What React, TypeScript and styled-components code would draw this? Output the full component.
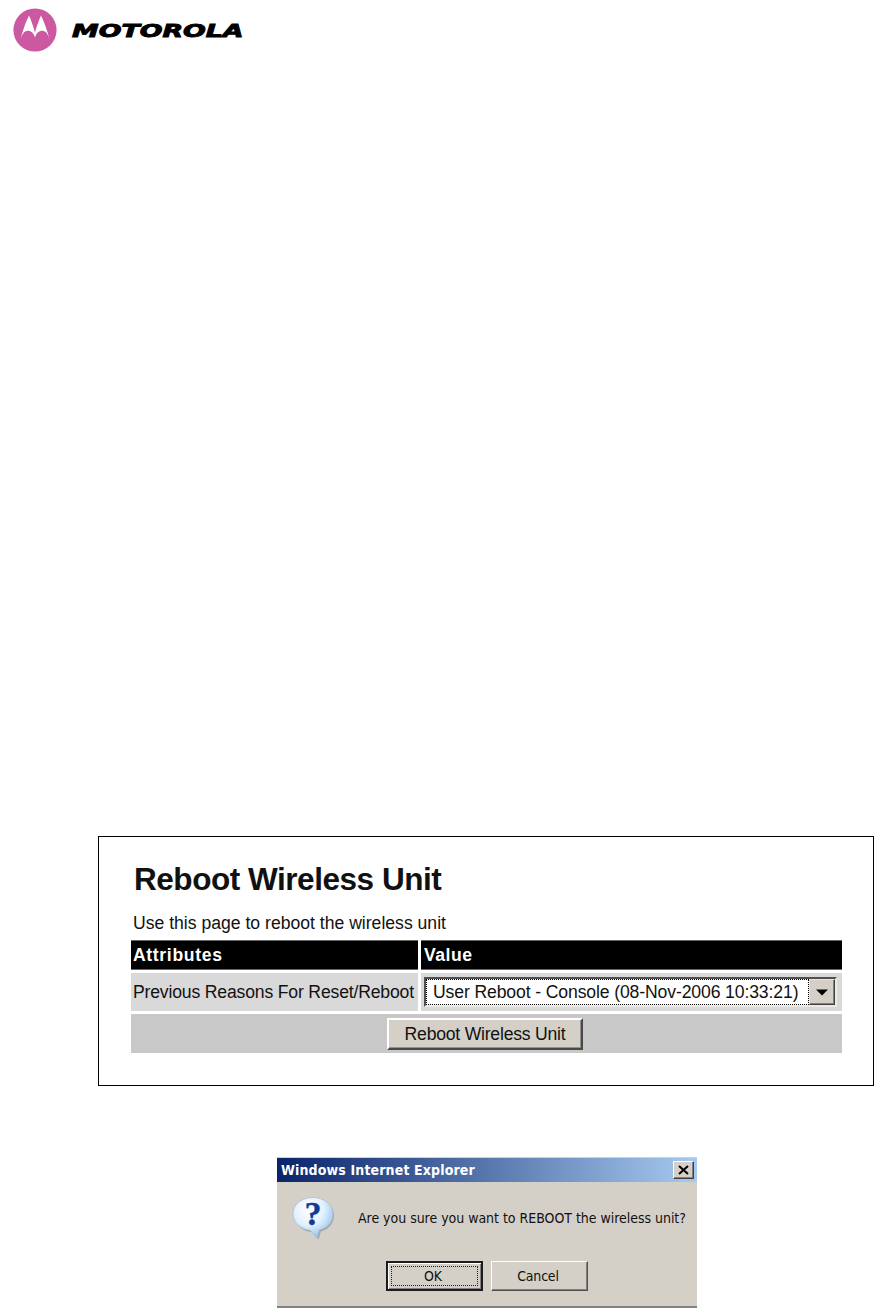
import React from "react";
import styled, { createGlobalStyle } from "styled-components";

const Global = createGlobalStyle`
  *, *::before, *::after { box-sizing: border-box; }
  body { margin: 0; background: #fff; color: #111; font-family: "Liberation Sans", Arial, sans-serif; }
`;

const Page = styled.main`
  width: 874px;
  height: 1308px;
  display: flex;
  flex-direction: column;
  overflow: hidden;
  background: #fff;
`;

const Brand = styled.header`
  flex: none;
  height: 60px;
  margin-bottom: 776px;
  padding: 8px 0 0 13px;
  display: flex;
  gap: 14px;
  svg { flex: none; display: block; }
`;

const Panel = styled.section`
  flex: none;
  height: 250px;
  margin-left: 98px;
  padding: 0 32px;
  border: 1px solid #000;
  display: flex;
  flex-direction: column;
`;

const Title = styled.h1`
  margin: 23px 0 0 3px;
  font-size: 31.5px;
  line-height: 38px;
  letter-spacing: -0.46px;
  white-space: nowrap;
`;

const Intro = styled.p`
  margin: 14px 0 0 2px;
  font-size: 17.6px;
  line-height: 22px;
  white-space: nowrap;
`;

const Table = styled.div`
  margin: 6px 0 0;
  width: 711px;
  display: grid;
  grid-template-columns: 287px 421px;
  grid-template-rows: 30px 38px 39px;
  gap: 3px;
`;

const HeadCell = styled.div<{ $spacing: string; $indent: string }>`
  padding-left: ${(p) => p.$indent};
  border: solid #666;
  border-width: 1px 0;
  background: #000;
  color: #fff;
  font-weight: bold;
  font-size: 17.6px;
  line-height: 28px;
  letter-spacing: ${(p) => p.$spacing};
`;

const Cell = styled.div<{ $wide?: boolean }>`
  display: flex;
  align-items: center;
  justify-content: ${(p) => (p.$wide ? "center" : "flex-start")};
  grid-column: ${(p) => (p.$wide ? "1 / -1" : "auto")};
  padding-left: ${(p) => (p.$wide ? "0" : "2px")};
  background: ${(p) => (p.$wide ? "#c8c8c8" : "#d9d9d9")};
  font-size: 17.6px;
  letter-spacing: -0.17px;
  white-space: nowrap;
`;

const Select = styled.div`
  width: 413px;
  height: 30px;
  margin-left: 1px;
  display: flex;
  background: #fff;
  border: 2px solid;
  border-color: #505050 #eceae6 #eceae6 #505050;
`;

const SelectValue = styled.span`
  flex: 1;
  border: 1px dotted #000;
  padding-left: 6px;
  line-height: 25px;
  letter-spacing: -0.12px;
`;

const Arrow = styled.span`
  width: 26px;
  display: flex;
  align-items: center;
  justify-content: center;
  background: #d4d0c8;
  border: 1px solid;
  border-color: #e6e3de #404040 #404040 #e6e3de;
  box-shadow: inset -1px -1px 0 #808080;
`;

const RebootButton = styled.button`
  width: 196px;
  height: 32px;
  margin-right: 3px;
  padding: 1px 0 0;
  background: #d4d0c8;
  border: 2px solid;
  border-color: #fff #484848 #484848 #fff;
  box-shadow: inset -1px -1px 0 #909090;
  font: 17.6px "Liberation Sans", Arial, sans-serif;
  letter-spacing: -0.22px;
  color: #111;
`;

const Dialog = styled.section`
  flex: none;
  width: 420px;
  height: 151px;
  margin: 71px 0 0 277px;
  border-top: 1px solid #d4d0c8;
  border-bottom: 2px solid #808080;
  background: #d4d0c8;
  color: #111;
  font-family: "DejaVu Sans Condensed", "DejaVu Sans", sans-serif;
  font-size: 14px;
  letter-spacing: -0.03px;
`;

const TitleBar = styled.div`
  height: 24px;
  padding: 0 3px 0 4px;
  display: flex;
  align-items: center;
  justify-content: space-between;
  background: linear-gradient(90deg, #0a246a, #a6caf0);
  color: #fff;
  font-weight: bold;
  letter-spacing: 0.14px;
`;

const CloseButton = styled.button`
  width: 21px;
  height: 18px;
  padding: 0;
  display: flex;
  align-items: center;
  justify-content: center;
  background: #d4d0c8;
  border: 1px solid;
  border-color: #fff #404040 #404040 #fff;
  box-shadow: inset -1px -1px 0 #808080;
`;

const Message = styled.div`
  height: 79px;
  padding: 11px 0 0 15px;
  display: flex;
  gap: 23px;
  svg { flex: none; }
  span { line-height: 50px; white-space: nowrap; }
`;

const Actions = styled.div`
  padding-left: 109px;
  display: flex;
  gap: 8px;
`;

const DialogButton = styled.button<{ $focused?: boolean }>`
  width: 97px;
  height: 30px;
  padding: ${(p) => (p.$focused ? "3px" : "0 3px 0 0")};
  background: #d4d0c8;
  border: ${(p) => (p.$focused ? "2px solid" : "1px solid")};
  border-color: ${(p) => (p.$focused ? "#1c1c1c" : "#fff #505050 #505050 #fff")};
  box-shadow: ${(p) => (p.$focused ? "inset 1px 1px 0 #fff, inset -1px -1px 0 #808080" : "inset -1px -1px 0 #808080")};
  font: 14px "DejaVu Sans Condensed", "DejaVu Sans", sans-serif;
  letter-spacing: -0.2px;
  color: #111;
`;

const FocusRing = styled.span`
  height: 100%;
  padding-right: 3px;
  display: flex;
  align-items: center;
  justify-content: center;
  border: 1px dotted #222;
`;

const Emblem = () => (
  <svg width="44" height="44" viewBox="0 0 44 44">
    <circle cx="22" cy="22" r="21.6" fill="#cb58a0" />
    <path
      fill="#fff"
      d="M16 7.500 C18.200 12.500 20.200 18 22 24.500 C23.800 18 25.800 12.500 28 7.500 C31 13.500 34.400 22.500 36.600 32 C35.200 27 33.200 22.800 29.300 22.800 C25.800 22.800 23.200 25.500 22 29.500 C20.800 25.500 18.200 22.800 14.700 22.800 C10.800 22.800 8.900 27 7.600 32 C9.600 22.500 13 13.500 16 7.500Z"
    />
  </svg>
);

const Wordmark = () => (
  <svg width="176" height="44" viewBox="0 0 176 44">
    <text
      x="1"
      y="28.8"
      textLength="171.5"
      lengthAdjust="spacingAndGlyphs"
      fontFamily='"DejaVu Sans", sans-serif'
      fontWeight="bold"
      fontStyle="italic"
      fontSize="18"
      stroke="#000"
      strokeWidth="0.9"
    >
      MOTOROLA
    </text>
  </svg>
);

const QuestionIcon = () => (
  <svg width="43" height="47" viewBox="0 -4 43 47">
    <defs>
      <radialGradient id="bubble" cx="0.4" cy="0.3" r="0.75">
        <stop offset="0" stopColor="#fff" />
        <stop offset="0.5" stopColor="#e4f1fd" />
        <stop offset="1" stopColor="#86bcee" />
      </radialGradient>
    </defs>
    <path
      d="M22 2 C33 2 42 9 42 18.500 C42 26.500 36 33 29 34.300 L26.500 42.500 L20 35 C10 34.500 3 27 3 18.500 C3 9 11 2 22 2Z"
      fill="#85847f"
      opacity="0.55"
    />
    <path
      d="M21 0.500 C32 0.500 41 7.500 41 17 C41 25 35.500 31.300 27.500 32.800 L24.800 41.300 L18.500 33.400 C8.500 32.500 1 25.500 1 17 C1 7.500 10 0.500 21 0.500Z"
      fill="url(#bubble)"
      stroke="#9dbedd"
      strokeWidth="0.7"
    />
    <text
      x="21"
      y="28"
      textAnchor="middle"
      fontFamily='"Liberation Serif", serif'
      fontWeight="bold"
      fontSize="34"
      letterSpacing="0"
      fill="#103a94"
      stroke="#103a94"
      strokeWidth="0.4"
    >
      ?
    </text>
  </svg>
);

export default function App() {
  return (
    <Page>
      <Global />
      <Brand>
        <Emblem />
        <Wordmark />
      </Brand>
      <Panel>
        <Title>Reboot Wireless Unit</Title>
        <Intro>Use this page to reboot the wireless unit</Intro>
        <Table>
          <HeadCell $spacing="0.65px" $indent="2px">Attributes</HeadCell>
          <HeadCell $spacing="0.5px" $indent="3px">Value</HeadCell>
          <Cell>Previous Reasons For Reset/Reboot</Cell>
          <Cell>
            <Select>
              <SelectValue>User Reboot - Console (08-Nov-2006 10:33:21)</SelectValue>
              <Arrow>
                <svg width="12" height="7" viewBox="0 0 12 7">
                  <path d="M0 0.500H12L6 6.500Z" fill="#000" />
                </svg>
              </Arrow>
            </Select>
          </Cell>
          <Cell $wide>
            <RebootButton>Reboot Wireless Unit</RebootButton>
          </Cell>
        </Table>
      </Panel>
      <Dialog>
        <TitleBar>
          Windows Internet Explorer
          <CloseButton aria-label="Close">
            <svg width="11" height="10" viewBox="0 0 11 10">
              <path d="M1 1L10 9M10 1L1 9" stroke="#000" strokeWidth="2" />
            </svg>
          </CloseButton>
        </TitleBar>
        <Message>
          <QuestionIcon />
          <span>Are you sure you want to REBOOT the wireless unit?</span>
        </Message>
        <Actions>
          <DialogButton $focused>
            <FocusRing>OK</FocusRing>
          </DialogButton>
          <DialogButton>Cancel</DialogButton>
        </Actions>
      </Dialog>
    </Page>
  );
}
